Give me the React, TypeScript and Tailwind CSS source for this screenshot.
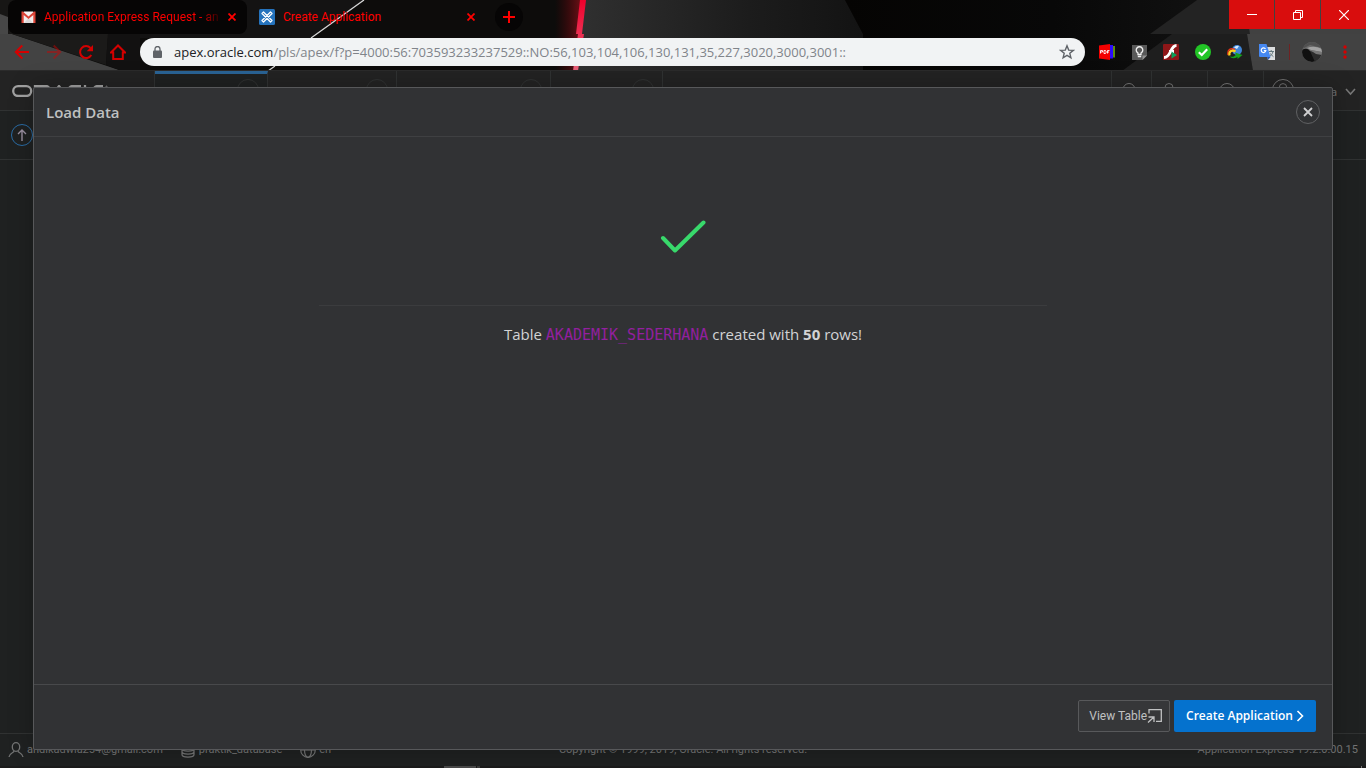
import React from "react";

function Wallpaper() {
  return (
    <svg className="absolute inset-0 h-full w-full" viewBox="0 0 1366 71" preserveAspectRatio="none" aria-hidden="true">
      <defs>
        <linearGradient id="glow" x1="0" x2="1" y1="0" y2="0">
          <stop offset="0" stopColor="#4a0507" stopOpacity="0" />
          <stop offset="1" stopColor="#6d1016" />
        </linearGradient>
        <linearGradient id="beam" x1="0" x2="0" y1="0" y2="1">
          <stop offset="0" stopColor="#f0002c" />
          <stop offset="1" stopColor="#e8627a" />
        </linearGradient>
        <linearGradient id="slate" x1="0" x2="1" y1="0" y2="0">
          <stop offset="0" stopColor="#303030" />
          <stop offset="0.6" stopColor="#1c1c1c" />
          <stop offset="1" stopColor="#131313" />
        </linearGradient>
        <linearGradient id="dusk" x1="0" x2="1" y1="0" y2="0">
          <stop offset="0" stopColor="#050403" />
          <stop offset="0.4" stopColor="#080808" />
          <stop offset="1" stopColor="#1a1a1a" />
        </linearGradient>
      </defs>
      <rect width="1366" height="71" fill="#0d0c0b" />
      <path d="M0 0H90L106 34H0Z" fill="#171615" />
      <path d="M90 0H364L311 38H106Z" fill="#141313" />
      <path d="M0 14L8 17V34H0Z" fill="#474747" />
      <path d="M0 34H12L122 71H0Z" fill="#434343" />
      <path d="M12 34H108L106 65Z" fill="#1b1a19" />
      <path d="M108 34H140V71H122L106 65Z" fill="#121111" />
      <path d="M364 0L311 38M275 66L268 71" stroke="#d6d6d6" strokeWidth="1.3" />
      <path d="M555 0H581L577 71H555Z" fill="url(#glow)" />
      <path d="M585 0H845L863 34V71H578Z" fill="url(#slate)" />
      <path d="M845 0H1197L1150 34H1366V71H863V34Z" fill="url(#dusk)" />
      <path d="M1197 0H1366V34H1150Z" fill="#232323" />
      <path d="M1172 34H1247L1253 71H1122Z" fill="#1e1e1e" />
      <path d="M1244 0H1366V34H1250Z" fill="#414141" />
      <path d="M1247 34H1366V71H1253Z" fill="#424242" />
      <path d="M580 0H586L582 34H576ZM578 34H584L578 71H573Z" fill="url(#beam)" />
    </svg>
  );
}

function CloseGlyph() {
  return (
    <svg className="h-2 w-2" viewBox="0 0 8 8" stroke="#ff0000" strokeWidth="1.8" aria-hidden="true">
      <path d="M0.5 0.5L7.5 7.5M7.5 0.5L0.5 7.5" />
    </svg>
  );
}

function TabStrip() {
  return (
    <div className="relative flex h-[34px] items-start pl-2 font-['Roboto','Noto_Sans',sans-serif]">
      <div className="flex h-[34px] w-[239px] items-center rounded-lg bg-[#060505] pr-[11px] pl-[13px]">
        <svg className="mr-2 h-[14px] w-[15px] shrink-0" viewBox="0 0 15 14" aria-hidden="true">
          <path d="M1 2H14V13H1Z" fill="#f1eeee" />
          <path d="M3 13L7.500 8L12 13Z" fill="#dcd8d8" />
          <path d="M0.500 1.500H2L7.500 6.500L13 1.500H14.500V13H12.300V5L7.500 9L2.700 5V13H0.500Z" fill="#dc4437" />
          <path d="M2.500 1.500H12.500L7.500 5.800Z" fill="#f6f2f2" />
        </svg>
        <span className="min-w-0 flex-1 bg-linear-to-r from-[#ff0000] from-88% to-[#300000] bg-clip-text text-[12px] leading-4 whitespace-nowrap text-transparent">
          Application Express Request - an
        </span>
        <button type="button" aria-label="Close tab" className="ml-2 flex h-4 w-2 items-center justify-center">
          <CloseGlyph />
        </button>
      </div>
      <div className="flex h-[34px] w-[239px] items-center pr-[11px] pl-3">
        <svg className="mr-2 h-4 w-4 shrink-0" viewBox="0 0 16 16" aria-hidden="true">
          <rect width="16" height="16" rx="1.500" fill="#2573bd" />
          <path d="M3 4.500L4.500 3L13 11.500L11.500 13ZM11.500 3L13 4.500L4.500 13L3 11.500Z" fill="#2573bd" stroke="#fff" strokeWidth="1.300" strokeLinejoin="round" />
        </svg>
        <span className="min-w-0 flex-1 text-[12px] leading-4 text-[#ff0000]">Create Application</span>
        <button type="button" aria-label="Close tab" className="ml-2 flex h-4 w-2 items-center justify-center">
          <CloseGlyph />
        </button>
      </div>
      <button type="button" aria-label="New tab" className="mt-[3px] ml-[9px] flex h-7 w-7 items-center justify-center rounded-full bg-[#060505]">
        <svg className="h-3 w-3" viewBox="0 0 12 12" stroke="#ff0000" strokeWidth="2" aria-hidden="true">
          <path d="M6 0V12M0 6H12" />
        </svg>
      </button>
      <div className="ml-auto flex h-[29px] gap-px">
        <button type="button" aria-label="Minimize" className="flex w-[45px] items-center justify-center bg-[#d90d0d]">
          <svg className="h-[10px] w-[10px]" viewBox="0 0 10 10" stroke="#fff" aria-hidden="true"><path d="M0 4.500H10" /></svg>
        </button>
        <button type="button" aria-label="Restore" className="flex w-[45px] items-center justify-center bg-[#d90d0d]">
          <svg className="h-[10px] w-[10px]" viewBox="0 0 10 10" stroke="#fff" fill="none" aria-hidden="true">
            <path d="M0.500 2.500H7.500V9.500H0.500ZM2.500 2.500V0.500H9.500V7.500H7.500" />
          </svg>
        </button>
        <button type="button" aria-label="Close" className="flex w-[45px] items-center justify-center bg-[#d90d0d]">
          <svg className="h-[10px] w-[10px]" viewBox="0 0 10 10" stroke="#fff" strokeWidth="1.200" aria-hidden="true">
            <path d="M0 0L10 10M10 0L0 10" />
          </svg>
        </button>
      </div>
    </div>
  );
}

function NavButton({ label, dim, children }: { label: string; dim?: boolean; children: React.ReactNode }) {
  return (
    <button type="button" aria-label={label} className={dim ? "flex h-7 w-8 items-center justify-center opacity-45" : "flex h-7 w-8 items-center justify-center"}>
      <svg className="h-4 w-4" viewBox="0 0 16 16" fill="none" stroke="#d40000" strokeWidth="2" aria-hidden="true">
        {children}
      </svg>
    </button>
  );
}

function Extension({ label, children }: { label: string; children: React.ReactNode }) {
  return (
    <button type="button" aria-label={label} className="flex h-7 w-8 items-center justify-center">
      <svg className="h-4 w-4" viewBox="0 0 16 16" aria-hidden="true">{children}</svg>
    </button>
  );
}

function Toolbar() {
  return (
    <div className="relative flex h-[37px] items-center border-b border-[#2b2b2b] pl-[6px]">
      <NavButton label="Back"><path d="M15 8H2M8.300 1.500L1.800 8L8.300 14.500" /></NavButton>
      <NavButton label="Forward" dim><path d="M1 8H14M7.700 1.500L14.200 8L7.700 14.500" /></NavButton>
      <NavButton label="Reload">
        <path d="M13.300 11A6 6 0 1 1 12.500 4" />
        <path d="M15 1V7.300H8.700Z" fill="#d40000" stroke="none" />
      </NavButton>
      <NavButton label="Home"><path d="M1 8.500L8 1.500L15 8.500H12.800V15H3.200V8.500Z" /></NavButton>
      <div className="ml-[6px] flex h-7 min-w-0 flex-1 items-center rounded-full bg-[#f1f3f4] pr-[10px] pl-[13px]">
        <svg className="mr-3 h-3 w-[9px] shrink-0" viewBox="0 0 9 12" aria-hidden="true">
          <rect y="4.500" width="9" height="7.500" rx="1" fill="#5f6368" />
          <path d="M2 5V3A2.500 2.500 0 0 1 7 3V5" fill="none" stroke="#5f6368" strokeWidth="1.300" />
        </svg>
        <div className="min-w-0 flex-1 overflow-hidden text-[13px] leading-5 whitespace-nowrap text-[#80848a]" role="textbox" aria-label="Address">
          <span className="text-[#202124]">apex.oracle.com</span>/pls/apex/f?p=4000:56:703593233237529::NO:56,103,104,106,130,131,35,227,3020,3000,3001::
        </div>
        <button type="button" aria-label="Bookmark" className="h-4 w-4">
          <svg className="h-4 w-4" viewBox="0 0 16 16" fill="none" stroke="#5f6368" strokeWidth="1.400" aria-hidden="true">
            <path d="M8 1.800L9.700 6.100L14.300 6.400L10.800 9.300L11.900 13.800L8 11.300L4.100 13.800L5.200 9.300L1.700 6.400L6.300 6.100Z" />
          </svg>
        </button>
      </div>
      <div className="ml-[6px] flex items-center">
        <Extension label="PDF">
          <path d="M0 1.500L11 0V16L0 14.500Z" fill="#f40000" />
          <path d="M11 1H14V14.500H11Z" fill="#2b0bff" />
          <path d="M14 2H16V13.500H14Z" fill="#5c8f0c" />
          <path d="M1.500 9.500V6.500H3.500V8H1.500M5 6.500V9.500H6.500L7.300 8L6.500 6.500ZM8.500 9.500V6.500H10.500M8.500 8H10" fill="none" stroke="#fff" strokeWidth="0.900" />
        </Extension>
        <Extension label="Ideas">
          <path d="M1 1H16V11.500L11.500 16H1Z" fill="#595959" />
          <path d="M11.500 16V11.500H16Z" fill="#929292" />
          <path d="M7 10.500V9A3.300 3.300 0 1 1 10 9V10.500ZM6.800 12.500H10.200" fill="none" stroke="#f1f1f1" strokeWidth="1.300" />
        </Extension>
        <Extension label="Flash">
          <rect width="16" height="16" rx="1" fill="#8e1618" />
          <path d="M13.500 1.500C7 1.500 8.500 13.500 1 13.500M6 7.500H11" fill="none" stroke="#fff" strokeWidth="2.800" />
          <path d="M8.500 7.500L14 11L8.500 14.500Z" fill="#0ca05a" />
        </Extension>
        <Extension label="Protection">
          <circle cx="8" cy="8" r="8" fill="#22c526" />
          <path d="M3.800 8.200L6.800 11L12.200 5.300" fill="none" stroke="#fff" strokeWidth="2.200" />
        </Extension>
        <Extension label="Downloader">
          <circle cx="10" cy="6" r="5" fill="#3f86d8" />
          <path d="M7 3.500A4.500 4.500 0 0 1 12 2L10 5Z" fill="#d5eaff" />
          <path d="M1 11C0 5.500 4 3.500 8 5.500" fill="none" stroke="#e53318" strokeWidth="1.400" />
          <path d="M2.500 11.500C1.500 7 5.500 5.500 8.500 7.500" fill="none" stroke="#ffd21a" strokeWidth="2.200" />
          <path d="M2.500 12C5 13.500 7 13 9 10.500L8 8.500L15.500 11L10.500 15V13C7 15 4 14.500 2.500 12Z" fill="#15a11c" />
        </Extension>
        <Extension label="Translate">
          <path d="M6 3H16V16H9Z" fill="#dcdedf" />
          <path d="M9.500 7.500H15M12.200 6V7.500M14 7.500C13.500 10 12 11.500 10.500 12.500M11 9.500L14.500 12.800" fill="none" stroke="#64777c" strokeWidth="1" />
          <path d="M0 0H7.500L11.500 13H1Q0 13 0 12Z" fill="#4688f1" />
          <path d="M8 13H11.500L9 16Z" fill="#2c57b5" />
          <path d="M6.500 5A2.300 2.300 0 1 0 6.800 6.700H4.800" fill="none" stroke="#fff" strokeWidth="1.200" />
        </Extension>
        <span className="ml-[6px] h-4 w-px bg-[#702222]" />
        <button type="button" aria-label="Profile" className="ml-3 h-5 w-5">
          <svg className="h-5 w-5" viewBox="0 0 20 20" aria-hidden="true">
            <clipPath id="avatar"><circle cx="10" cy="10" r="10" /></clipPath>
            <g clipPath="url(#avatar)">
              <rect width="20" height="20" fill="#6a6a6a" />
              <path d="M0 0H20V6L8 3L0 7Z" fill="#505050" />
              <path d="M5 6Q12 3 20 7V10L9 8Z" fill="#a3a3a3" />
              <path d="M0 8Q5 5 8 9L13 13L14 20H0Z" fill="#101010" />
              <path d="M8 9L20 12L16 20H13Z" fill="#2c2c2c" />
              <path d="M8 8L20 10V13L14 12Z" fill="#777" />
            </g>
          </svg>
        </button>
        <button type="button" aria-label="Menu" className="mr-[11px] ml-[13px] flex h-4 w-5 items-center justify-center">
          <svg className="h-[14px] w-[4px]" viewBox="0 0 4 14" fill="#d40000" aria-hidden="true">
            <circle cx="2" cy="2" r="1.700" /><circle cx="2" cy="7" r="1.700" /><circle cx="2" cy="12" r="1.700" />
          </svg>
        </button>
      </div>
    </div>
  );
}

function MenuTab({ label, width, active }: { label: string; width: string; active?: boolean }) {
  return (
    <button
      type="button"
      aria-label={label}
      className={
        (active ? "border-t-[3px] border-t-[#2a6496] bg-[#1f2121] pt-0 " : "pt-[3px] ") +
        "flex items-start justify-end border-r border-r-[#303232] pr-2 " + width
      }
    >
      <span className="mt-[5px] h-[22px] w-[22px] rounded-full border border-[#303232]" />
    </button>
  );
}

function AppHeader() {
  return (
    <header className="flex h-10 border-b border-[#303232] bg-[#232323]">
      <div className="flex w-[155px] items-start border-r border-[#303232] pt-[14px] pl-3">
        <svg className="h-3 w-[96px]" viewBox="0 0 96 12" fill="none" stroke="#a2a2a2" strokeWidth="2.300" aria-label="Oracle" role="img">
          <rect x="1.200" y="1.200" width="18" height="9.800" rx="4.900" />
          <path d="M23 12V1H34A3.500 3.500 0 0 1 34 8H26L34 12" />
          <path d="M39 12L47 1L55 12M45 8H52" />
          <path d="M69 1H61A5 5 0 0 0 61 11H69" />
          <path d="M73 0V11H81" />
          <path d="M91 1H86A5 5 0 0 0 86 11H91M81 6H91" />
          <circle cx="94.500" cy="1.500" r="0.600" strokeWidth="0.600" />
        </svg>
      </div>
      <nav className="flex" aria-label="Main">
        <MenuTab label="App Builder" width="w-[113px]" active />
        <MenuTab label="SQL Workshop" width="w-[129px]" />
        <MenuTab label="Team Development" width="w-[154px]" />
        <MenuTab label="App Gallery" width="w-[112px]" />
      </nav>
      <div className="ml-auto flex text-[#777]">
        <button type="button" aria-label="Search" className="flex w-10 items-start border-l border-[#303232] pt-3 pl-[10px]">
          <svg className="h-4 w-4" viewBox="0 0 16 16" fill="none" stroke="currentColor" aria-hidden="true"><circle cx="7" cy="6.500" r="6" /><path d="M11 11L15 15" /></svg>
        </button>
        <button type="button" aria-label="Administration" className="flex w-14 items-start border-l border-[#303232] pt-3 pl-[9px]">
          <svg className="h-4 w-4" viewBox="0 0 16 16" fill="none" stroke="currentColor" aria-hidden="true"><circle cx="8" cy="4.500" r="4" /><path d="M2 15C2 11 5 9 8 9S14 11 14 15" /></svg>
        </button>
        <button type="button" aria-label="Help" className="flex w-14 items-start border-l border-[#303232] pt-3 pl-[11px]">
          <svg className="h-4 w-4" viewBox="0 0 16 16" fill="none" stroke="currentColor" aria-hidden="true"><circle cx="8" cy="8" r="7.500" /></svg>
        </button>
        <button type="button" className="flex w-[103px] items-start border-l border-[#303232] pt-2 pl-2 text-[11px] leading-4">
          <svg className="h-[22px] w-[22px]" viewBox="0 0 24 24" fill="none" stroke="currentColor" aria-hidden="true"><circle cx="12" cy="12" r="11.500" /><circle cx="12" cy="9" r="4" /></svg>
          <span className="mt-[5px] flex-1 pr-2 text-right">andika</span>
          <svg className="mt-[9px] mr-[10px] h-2 w-[11px]" viewBox="0 0 11 8" fill="none" stroke="currentColor" strokeWidth="1.600" aria-hidden="true"><path d="M1 1L5.500 6L10 1" /></svg>
        </button>
      </div>
    </header>
  );
}

function AppFooter() {
  return (
    <footer className="grid h-[33px] grid-cols-3 items-center border-t border-[#303232] px-2 font-['Roboto','Noto_Sans',sans-serif] text-[11px] leading-4 text-[#737474]">
      <div className="flex items-center">
        <svg className="mr-[3px] h-4 w-4" viewBox="0 0 16 16" fill="none" stroke="currentColor" strokeWidth="1.300" aria-hidden="true">
          <ellipse cx="8" cy="5" rx="3.700" ry="4.300" /><path d="M6 9C6 11 1.500 10.500 1 15M10 9C10 11 14.500 10.500 15 15" />
        </svg>
        <span>andikadwia254@gmail.com</span>
        <svg className="mr-1 ml-[18px] h-4 w-[14px]" viewBox="0 0 14 16" fill="none" stroke="currentColor" strokeWidth="1.300" aria-hidden="true">
          <ellipse cx="7" cy="3.500" rx="6" ry="2.500" /><path d="M1 3.500V12.500C1 16 13 16 13 12.500V3.500M1 6.500C1 10 13 10 13 6.500M1 9.500C1 13 13 13 13 9.500" />
        </svg>
        <span>praktik_database</span>
        <svg className="mr-[3px] ml-[18px] h-4 w-4" viewBox="0 0 16 16" fill="none" stroke="currentColor" strokeWidth="1.200" aria-hidden="true">
          <circle cx="8" cy="8" r="7.300" /><ellipse cx="8" cy="8" rx="3.500" ry="7.300" /><path d="M1 8H15" />
        </svg>
        <span>en</span>
      </div>
      <div className="text-center">Copyright © 1999, 2019, Oracle. All rights reserved.</div>
      <div className="text-right">Application Express 19.2.0.00.15</div>
    </footer>
  );
}

function LoadDataDialog() {
  return (
    <section
      role="dialog"
      aria-label="Load Data"
      className="absolute inset-x-[33px] top-4 bottom-[18px] flex flex-col rounded-xs border border-[#57585a] bg-[#313234] shadow-[0_0_24px_rgba(0,0,0,0.25)]"
    >
      <div className="flex h-[49px] items-center border-b border-[#3f4042] pr-3 pl-3">
        <h1 className="flex-1 text-[15px] leading-6 font-semibold text-[#bfc0c1]">Load Data</h1>
        <button type="button" aria-label="Close dialog" className="flex h-6 w-6 items-center justify-center rounded-full border border-[#606163]">
          <svg className="h-[10px] w-[10px]" viewBox="0 0 10 10" stroke="#d0d0d1" strokeWidth="1.800" aria-hidden="true"><path d="M1 1L9 9M9 1L1 9" /></svg>
        </button>
      </div>
      <div className="mx-auto w-full max-w-[728px] flex-1">
        <div className="flex h-[169px] justify-center border-b border-[#3b3c3e] pt-[83px]">
          <svg className="h-[33px] w-[46px]" viewBox="0 0 46 33" fill="none" stroke="#38d96b" strokeWidth="4" strokeLinecap="round" strokeLinejoin="round" aria-label="Success" role="img">
            <path d="M3 18L15 30.500L43.500 2.500" />
          </svg>
        </div>
        <p className="mt-4 text-center text-[15px] leading-6 text-[#d2d3d4]">
          Table <code className="font-['DejaVu_Sans_Mono',monospace] text-[15px] text-[#92209f]">AKADEMIK_SEDERHANA</code> created with <strong>50</strong> rows!
        </p>
      </div>
      <div className="flex h-[65px] items-start justify-end gap-1 border-t border-[#48494b] pt-[15px] pr-4">
        <button type="button" className="flex h-8 items-center rounded-xs border border-[#58595b] bg-[#363739] pr-[7px] pl-[10px] font-['Roboto','Noto_Sans',sans-serif] text-[12px] leading-4 text-[#c0c1c2]">
          View Table
          <svg className="h-[14px] w-[15px]" viewBox="0 0 15 14" fill="none" stroke="currentColor" strokeWidth="1.300" aria-hidden="true">
            <path d="M2 4.500V0.700H14.300V12.300H9M1.500 8H7V13M7 8L1 13.500" />
          </svg>
        </button>
        <button type="button" className="flex h-8 items-center rounded-xs bg-[#0572ce] px-3 text-[12px] leading-4 font-semibold text-white">
          Create Application
          <svg className="ml-[3px] h-3 w-[8px]" viewBox="0 0 8 12" fill="none" stroke="currentColor" strokeWidth="1.600" aria-hidden="true"><path d="M1.500 1L6.500 6L1.500 11" /></svg>
        </button>
      </div>
    </section>
  );
}

export default function App() {
  return (
    <div className="flex min-h-screen flex-col bg-[#1f2121] font-['Open_Sans','Noto_Sans',sans-serif]">
      <div className="relative">
        <Wallpaper />
        <TabStrip />
        <Toolbar />
      </div>
      <main className="relative flex flex-1 flex-col">
        <AppHeader />
        <div className="flex h-[49px] items-center border-b border-[#303232] pl-[11px]">
          <button type="button" aria-label="Up" className="flex h-[22px] w-[22px] items-center justify-center rounded-full border border-[#2a6ca5]">
            <svg className="h-3 w-[10px]" viewBox="0 0 10 12" fill="none" stroke="#9a8fa0" strokeWidth="1.400" aria-hidden="true"><path d="M5 12V1M1 5L5 1L9 5" /></svg>
          </button>
        </div>
        <div className="flex-1" />
        <AppFooter />
        <div className="flex h-[2px] bg-[#1b1b1b]">
          <span className="ml-[444px] w-8 bg-[#4a4a4a]" />
          <span className="ml-px w-[3px] bg-[#3a3a3a]" />
          <span className="mr-1 ml-auto w-px bg-[#777]" />
        </div>
        <LoadDataDialog />
      </main>
    </div>
  );
}
